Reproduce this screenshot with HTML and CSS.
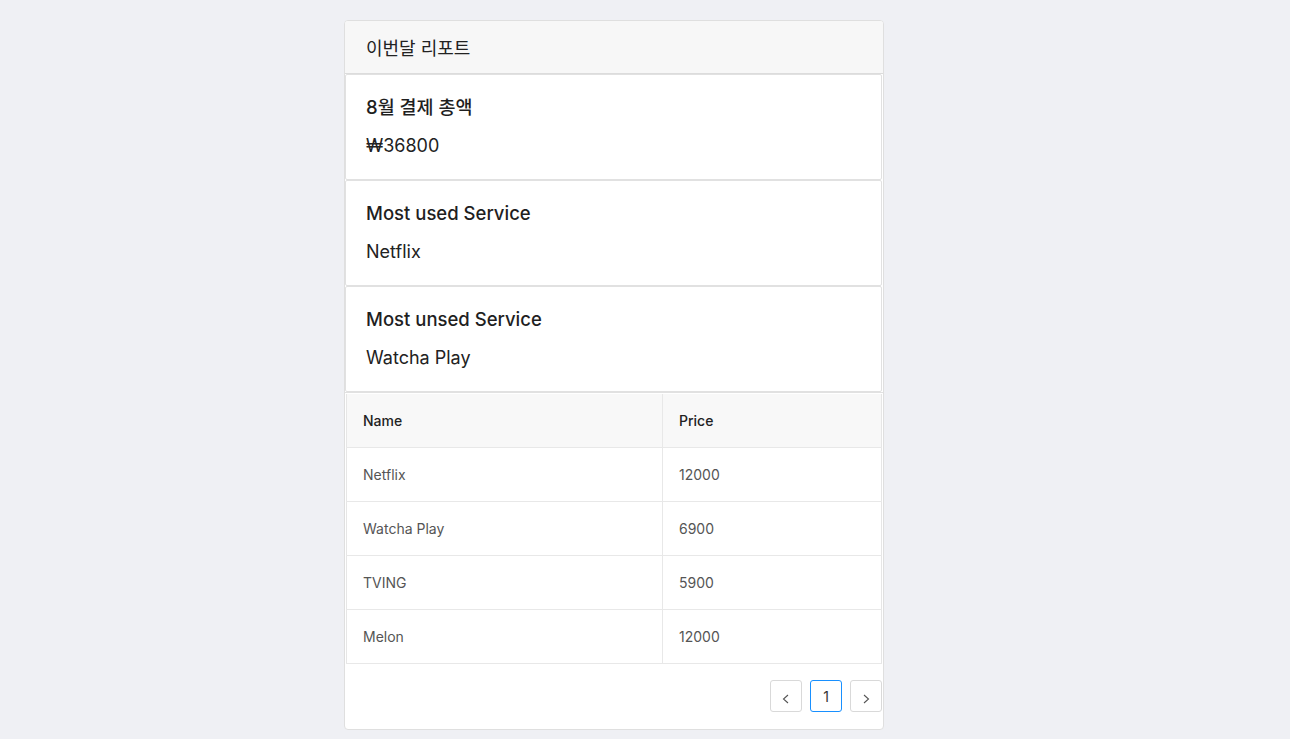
FILE: index.html
```html
<!DOCTYPE html>
<html lang="ko">
<head>
<meta charset="utf-8">
<title>이번달 리포트</title>
<link rel="stylesheet" href="styles.css">
</head>
<body>
<div class="card">
  <div class="card-head">이번달 리포트</div>
  <div class="item">
    <div class="item-title">8월 결제 총액</div>
    <div class="item-value">₩36800</div>
  </div>
  <div class="item">
    <div class="item-title">Most used Service</div>
    <div class="item-value">Netflix</div>
  </div>
  <div class="item">
    <div class="item-title">Most unsed Service</div>
    <div class="item-value">Watcha Play</div>
  </div>
  <div class="table-wrap">
    <table class="tbl">
      <thead>
        <tr><th class="c-name">Name</th><th class="c-price">Price</th></tr>
      </thead>
      <tbody>
        <tr><td>Netflix</td><td>12000</td></tr>
        <tr><td>Watcha Play</td><td>6900</td></tr>
        <tr><td>TVING</td><td>5900</td></tr>
        <tr><td>Melon</td><td>12000</td></tr>
      </tbody>
    </table>
    <div class="pager">
      <span class="pg-btn"><svg width="12" height="12" viewBox="0 0 12 12"><path d="M8 2 L3.5 6 L8 10" fill="none" stroke="#555" stroke-width="1.1"/></svg></span>
      <span class="pg-btn active">1</span>
      <span class="pg-btn"><svg width="12" height="12" viewBox="0 0 12 12"><path d="M4 2 L8.5 6 L4 10" fill="none" stroke="#555" stroke-width="1.1"/></svg></span>
    </div>
  </div>
</div>
</body>
</html>
```
FILE: styles.css
```css
html, body {
  margin: 0;
  padding: 0;
  background: #eff0f4;
}
body {
  font-family: Inter, "Noto Sans CJK KR", sans-serif;
  color: #222;
  padding-top: 20px;
  padding-left: 344px;
}
.card {
  width: 538px;
  background: #fff;
  border: 1px solid #dfdfdf;
  border-radius: 4px;
  overflow: hidden;
}
.card-head {
  height: 52px;
  background: #f7f7f7;
  border-bottom: 1px solid #dcdcdc;
  display: flex;
  align-items: center;
  padding-left: 21px;
  font-size: 18px;
  color: #222;
  font-family: "Noto Sans CJK KR", sans-serif;
}
.item {
  border: 1px solid #e1e1e1;
  border-radius: 2px;
  margin-right: 1px;
  height: 106px;
  box-sizing: border-box;
  padding: 20px 20px 0 20px;
  display: flex;
  flex-direction: column;
  gap: 15px;
}
.item-title {
  font-size: 18.5px;
  font-weight: 500;
  line-height: 24px;
  color: #1f1f1f;
}
.item-value {
  font-size: 18px;
  line-height: 24px;
  color: #222;
}
.table-wrap {
  border-top: 1px solid #e1e1e1;
  padding-top: 1px;
}
.tbl {
  width: 536px;
  margin-left: 1px;
  border-collapse: collapse;
  font-size: 14px;
  border-left: 1px solid #e6e6e6;
  border-right: 1px solid #e6e6e6;
}
.tbl th, .tbl td {
  height: 53px;
  padding: 0 0 0 16px;
  text-align: left;
  border-bottom: 1px solid #e8e8e8;
}
.tbl th {
  background: #f8f8f8;
  font-weight: 500;
  color: #222;
}
.tbl td {
  color: #555;
}
.tbl .c-name,
.tbl td:first-child {
  width: 299px;
  border-right: 1px solid #e8e8e8;
}
.pager {
  display: flex;
  justify-content: flex-end;
  gap: 8px;
  padding: 16px 1px 17px 0;
}
.pg-btn {
  width: 30px;
  height: 30px;
  border: 1px solid #d9d9d9;
  border-radius: 3px;
  display: flex;
  align-items: center;
  justify-content: center;
  font-size: 14px;
  color: #444;
  background: #fff;
}
.pg-btn svg {
  margin-top: 6px;
}
.pg-btn.active {
  border-color: #1890ff;
  color: #333;
}
```
